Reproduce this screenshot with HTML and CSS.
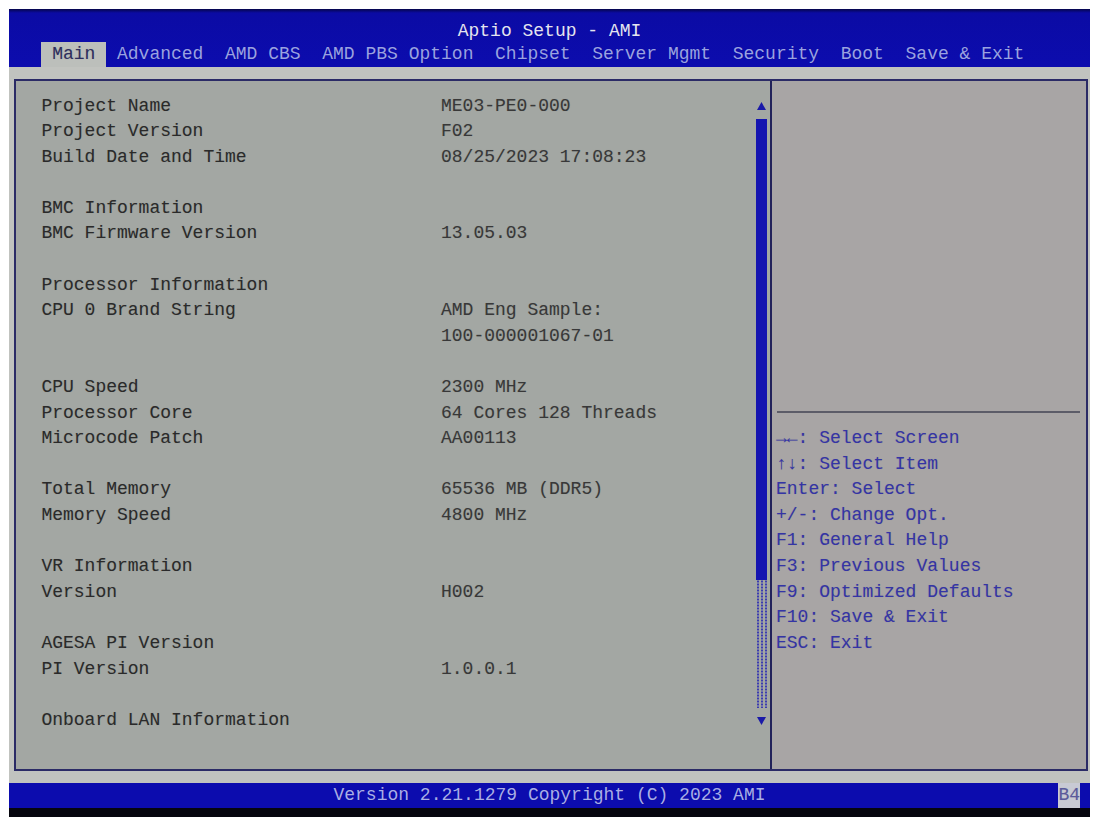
FILE: index.html
```html
<!DOCTYPE html>
<html lang="en">

<head>
    <meta charset="UTF-8">
    <meta name="viewport" content="width=device-width, initial-scale=1.0">
    <title>Aptio Setup - AMI</title>
    <link rel="stylesheet" href="styles.css">
</head>

<body>
    <div class="screen">
        <header class="top">
            <div class="title">Aptio Setup - AMI</div>
            <nav class="tabs">
                <span class="tab active">Main</span>
                <span class="tab">Advanced</span>
                <span class="tab">AMD CBS</span>
                <span class="tab">AMD PBS Option</span>
                <span class="tab">Chipset</span>
                <span class="tab">Server Mgmt</span>
                <span class="tab">Security</span>
                <span class="tab">Boot</span>
                <span class="tab">Save &amp; Exit</span>
            </nav>
        </header>

        <main class="frame">
            <section class="info">
                <div class="rows">
                    <div class="row"><span>Project Name</span><span class="val">ME03-PE0-000</span></div>
                    <div class="row"><span>Project Version</span><span class="val">F02</span></div>
                    <div class="row"><span>Build Date and Time</span><span class="val">08/25/2023 17:08:23</span></div>
                    <div class="row"></div>
                    <div class="row"><span>BMC Information</span></div>
                    <div class="row"><span>BMC Firmware Version</span><span class="val">13.05.03</span></div>
                    <div class="row"></div>
                    <div class="row"><span>Processor Information</span></div>
                    <div class="row"><span>CPU 0 Brand String</span><span class="val">AMD Eng Sample:</span></div>
                    <div class="row"><span></span><span class="val">100-000001067-01</span></div>
                    <div class="row"></div>
                    <div class="row"><span>CPU Speed</span><span class="val">2300 MHz</span></div>
                    <div class="row"><span>Processor Core</span><span class="val">64 Cores 128 Threads</span></div>
                    <div class="row"><span>Microcode Patch</span><span class="val">AA00113</span></div>
                    <div class="row"></div>
                    <div class="row"><span>Total Memory</span><span class="val">65536 MB (DDR5)</span></div>
                    <div class="row"><span>Memory Speed</span><span class="val">4800 MHz</span></div>
                    <div class="row"></div>
                    <div class="row"><span>VR Information</span></div>
                    <div class="row"><span>Version</span><span class="val">H002</span></div>
                    <div class="row"></div>
                    <div class="row"><span>AGESA PI Version</span></div>
                    <div class="row"><span>PI Version</span><span class="val">1.0.0.1</span></div>
                    <div class="row"></div>
                    <div class="row"><span>Onboard LAN Information</span></div>
                </div>

                <div class="scroll">
                    <div class="arrow">
                        <svg width="9" height="8" viewBox="0 0 9 8"><polygon points="4.5,0 9,8 0,8" /></svg>
                    </div>
                    <div class="thumb"></div>
                    <div class="track"></div>
                    <div class="arrow">
                        <svg width="9" height="8" viewBox="0 0 9 8"><polygon points="0,0 9,0 4.5,8" /></svg>
                    </div>
                </div>
            </section>

            <aside class="help">
                <div class="help-desc"></div>
                <div class="sep"></div>
                <ul class="keys">
                    <li>→←: Select Screen</li>
                    <li>↑↓: Select Item</li>
                    <li>Enter: Select</li>
                    <li>+/-: Change Opt.</li>
                    <li>F1: General Help</li>
                    <li>F3: Previous Values</li>
                    <li>F9: Optimized Defaults</li>
                    <li>F10: Save &amp; Exit</li>
                    <li>ESC: Exit</li>
                </ul>
            </aside>
        </main>

        <footer class="bottom">
            <span></span>
            <span class="version">Version 2.21.1279 Copyright (C) 2023 AMI</span>
            <span class="code">B4</span>
        </footer>
        <div class="edge"></div>
    </div>
</body>

</html>
```

FILE: styles.css
```css
/* Aptio setup screen, 100 x 31 character grid (10.8px cells) */

* {
    box-sizing: border-box;
}

body {
    margin: 0;
    background-color: #fff;
    font-family: "Liberation Mono", "DejaVu Sans Mono", monospace;
    font-size: 18px;
}

.screen {
    display: flex;
    flex-direction: column;
    width: 1081px;
    height: 808px;
    margin: 9px 0 0 9px;
    background-color: #c1c3bf;
    /* light strip around the frame */
    text-shadow: 0 0 1px rgba(0, 0, 0, 0.15);
}

/* Header */

.top {
    height: 58px;
    background: linear-gradient(#06064a 0, #0b0ba4 4px, #0c0cae 100%);
}

.title {
    height: 33px;
    padding-top: 12px;
    line-height: 21px;
    text-align: center;
    color: #e4e4f2;
}

.tabs {
    display: flex;
    height: 25px;
    padding-left: 32.4px;
    line-height: 25px;
    color: #9aa2e2;
}

.tab {
    padding: 0 10.8px;
    white-space: pre;
}

.tab.active {
    background-color: #bcbfbb;
    color: #2e2e5e;
}

/* Main frame */

.frame {
    display: flex;
    height: 692px;
    margin: 12px 2px 0 5px;
    border: 2px solid #2b2b66;
}

.info {
    display: flex;
    width: 756px;
    background-color: #a3a7a3;
    border-right: 2px solid #22225a;
}

.rows {
    flex: 1;
    padding: 12.5px 0 0 25.4px;
}

.row {
    display: grid;
    grid-template-columns: 399.6px 1fr;
    height: 25.6px;
    line-height: 25.6px;
    color: #2a2a2a;
    white-space: pre;
}

.row .val {
    color: #383838;
}

.scroll {
    display: flex;
    flex-direction: column;
    width: 11px;
    height: 640px;
    margin: 12.5px 3px 0 0;
}

.arrow {
    display: flex;
    align-items: center;
    justify-content: center;
    height: 25.6px;
}

.arrow svg {
    fill: #1a1aa8;
}

.thumb {
    height: 461px;
    background-color: #1414b0;
}

.track {
    flex: 1;
    background-image: radial-gradient(circle, #3b3bb0 0.9px, transparent 1.3px);
    background-size: 4px 3px;
}

.help {
    flex: 1;
    padding: 0 6px 0 4px;
    background-color: #a8a5a5;
}

.help-desc {
    height: 330px;
}

.sep {
    height: 2px;
    margin-left: 1px;
    background-color: #5c5c68;
}

.keys {
    margin: 13px 0 0;
    padding: 0;
    list-style: none;
    color: #3434a6;
}

.keys li {
    height: 25.6px;
    line-height: 25.6px;
    white-space: pre;
}

/* Footer */

.bottom {
    display: grid;
    grid-template-columns: 1fr auto 1fr;
    height: 25px;
    margin-top: 12px;
    background-color: #0c0cae;
    line-height: 25px;
    color: #a9aee8;
}

.code {
    justify-self: end;
    width: 21.6px;
    margin-right: 10px;
    background-color: #c8cad4;
    color: #5a5a9c;
}

.edge {
    height: 9px;
    background-color: #06060e;
}
```
